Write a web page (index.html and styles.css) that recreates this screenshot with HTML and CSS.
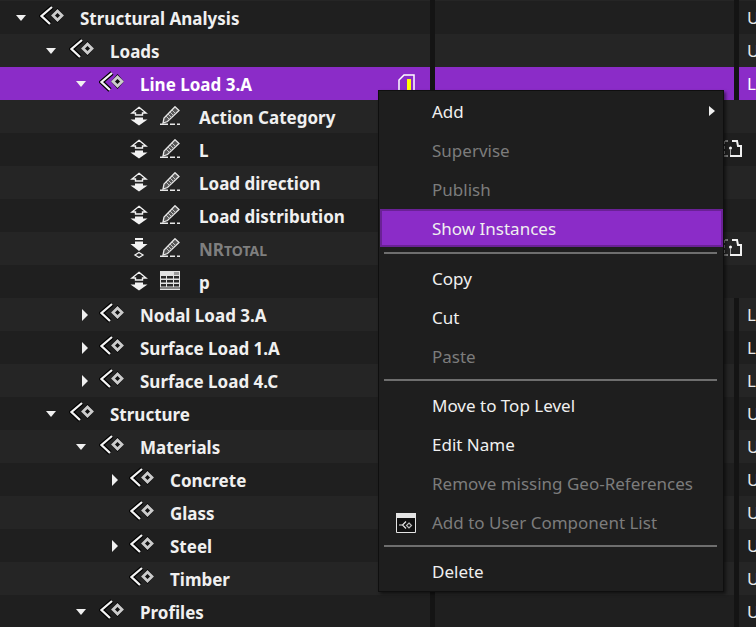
FILE: index.html
```html
<!DOCTYPE html>
<html lang="en">
<head>
    <meta charset="UTF-8">
    <meta name="viewport" content="width=device-width, initial-scale=1.0">
    <title>Component Tree</title>
    <link rel="stylesheet" href="styles.css">
</head>
<body>

<svg class="defs" width="0" height="0" aria-hidden="true">
    <symbol id="comp" viewBox="0 0 25 21">
        <path d="M13 2 2.500 11 11 19" fill="none" stroke="#000" stroke-width="4.500"/>
        <path d="M18.500 3 25 10.500 18.500 18 12 10.500Z" fill="#000"/>
        <path d="M13 2 2.500 11 11 19" fill="none" stroke="#f4f4f4" stroke-width="2.300"/>
        <path d="M18.500 6 23 10.500 18.500 15 14 10.500Z" fill="#111" stroke="#cccccc" stroke-width="2.800"/>
    </symbol>
    <symbol id="updown" viewBox="0 0 18 19">
        <path d="M9 .8 16 6.500H12.500V8.500H5.500V6.500H2Z" fill="none" stroke="#f2f2f2" stroke-width="1.400"/>
        <path d="M5 11H13V13H17.500L9 19 .5 13H5Z" fill="#f2f2f2"/>
    </symbol>
    <symbol id="downset" viewBox="0 0 18 20">
        <path d="M5 0H13V2H5ZM5 3.500H13V6H17.500L9 13 .5 6H5Z" fill="#f2f2f2"/>
        <path d="M9 14.500 13 17 9 19.500 5 17Z" fill="none" stroke="#f2f2f2" stroke-width="1.300"/>
    </symbol>
    <symbol id="pencil" viewBox="0 0 20 19">
        <path d="M15 .7 19 4.500 7.500 15.500 3 17 4 12Z" fill="#555" stroke="#e8e8e8" stroke-width="1.300"/>
        <path d="M6 10 9.500 13.500M8 8 11.500 11.500M10 6 13.500 9.500M12 4 15.500 7.500" stroke="#c4c4c4" stroke-width="1"/>
        <path d="M0 18.200H8M10 18.200H15M17 18.200H20" stroke="#e8e8e8" stroke-width="1.500"/>
    </symbol>
    <symbol id="table" viewBox="0 0 20 19">
        <path d="M0 0H20V19H0Z" fill="#e2e2e2"/>
        <path d="M14 1H19V4H14Z" fill="#9a9a9a"/>
        <path d="M1 5H6V7.500H1ZM7 5H13V7.500H7ZM14 5H19V7.500H14ZM1 9H6V11.500H1ZM7 9H13V11.500H7ZM14 9H19V11.500H14ZM1 13H6V15.500H1ZM7 13H13V15.500H7ZM14 13H19V15.500H14ZM0 16.500H20V17.500H0Z" fill="#2a2a2a"/>
    </symbol>
    <symbol id="link" viewBox="0 0 19 17">
        <path d="M9 1H14L15 6H18V16H7" fill="none" stroke="#f2f2f2" stroke-width="2"/>
        <path d="M1 1V4M1 6V9M1 11V14M1 16H5M2 1H5" stroke="#ddd" stroke-width="1" fill="none"/>
        <circle cx="7.500" cy="8" r="1.500" fill="#f2f2f2"/>
        <path d="M7.500 9V15" stroke="#aaa" stroke-width="1"/>
    </symbol>
</svg>

<div class="tree">
    <div class="row stub"><div class="name"></div><div class="sep"></div><div class="mid"></div><div class="sep"></div></div>

    <div class="row">
        <div class="name lvl-0"><span class="tri down"></span><svg class="ic-comp"><use href="#comp"/></svg><span class="label">Structural Analysis</span></div>
        <div class="sep"></div><div class="mid"></div><div class="sep"></div><div class="last">U</div>
    </div>
    <div class="row">
        <div class="name lvl-1"><span class="tri down"></span><svg class="ic-comp"><use href="#comp"/></svg><span class="label">Loads</span></div>
        <div class="sep"></div><div class="mid"></div><div class="sep"></div><div class="last">U</div>
    </div>
    <div class="row selected">
        <div class="name lvl-2"><span class="tri down"></span><svg class="ic-comp"><use href="#comp"/></svg><span class="label">Line Load 3.A</span>
            <svg class="ic-note" viewBox="0 0 17 20"><path d="M6 1H16V19H1V6Z" fill="none" stroke="#fff" stroke-width="1.500"/><path d="M9 5H13V17H9Z" fill="#ffff00"/></svg>
        </div>
        <div class="sep"></div><div class="mid"></div><div class="sep"></div><div class="last">L</div>
    </div>

    <div class="row param">
        <svg class="ic-arrow"><use href="#updown"/></svg><svg class="ic-kind"><use href="#pencil"/></svg><span class="label">Action Category</span>
    </div>
    <div class="row param">
        <svg class="ic-arrow"><use href="#updown"/></svg><svg class="ic-kind"><use href="#pencil"/></svg><span class="label">L</span>
        <svg class="ic-link"><use href="#link"/></svg>
    </div>
    <div class="row param">
        <svg class="ic-arrow"><use href="#updown"/></svg><svg class="ic-kind"><use href="#pencil"/></svg><span class="label">Load direction</span>
    </div>
    <div class="row param">
        <svg class="ic-arrow"><use href="#updown"/></svg><svg class="ic-kind"><use href="#pencil"/></svg><span class="label">Load distribution</span>
    </div>
    <div class="row param">
        <svg class="ic-arrow"><use href="#downset"/></svg><svg class="ic-kind"><use href="#pencil"/></svg><span class="label muted">NR<span class="caps">TOTAL</span></span>
        <svg class="ic-link"><use href="#link"/></svg>
    </div>
    <div class="row param">
        <svg class="ic-arrow"><use href="#updown"/></svg><svg class="ic-kind"><use href="#table"/></svg><span class="label">p</span>
    </div>

    <div class="row">
        <div class="name lvl-2"><span class="tri right"></span><svg class="ic-comp"><use href="#comp"/></svg><span class="label">Nodal Load 3.A</span></div>
        <div class="sep"></div><div class="mid"></div><div class="sep"></div><div class="last">L</div>
    </div>
    <div class="row">
        <div class="name lvl-2"><span class="tri right"></span><svg class="ic-comp"><use href="#comp"/></svg><span class="label">Surface Load 1.A</span></div>
        <div class="sep"></div><div class="mid"></div><div class="sep"></div><div class="last">L</div>
    </div>
    <div class="row">
        <div class="name lvl-2"><span class="tri right"></span><svg class="ic-comp"><use href="#comp"/></svg><span class="label">Surface Load 4.C</span></div>
        <div class="sep"></div><div class="mid"></div><div class="sep"></div><div class="last">L</div>
    </div>
    <div class="row">
        <div class="name lvl-1"><span class="tri down"></span><svg class="ic-comp"><use href="#comp"/></svg><span class="label">Structure</span></div>
        <div class="sep"></div><div class="mid"></div><div class="sep"></div><div class="last">U</div>
    </div>
    <div class="row">
        <div class="name lvl-2"><span class="tri down"></span><svg class="ic-comp"><use href="#comp"/></svg><span class="label">Materials</span></div>
        <div class="sep"></div><div class="mid"></div><div class="sep"></div><div class="last">U</div>
    </div>
    <div class="row">
        <div class="name lvl-3"><span class="tri right"></span><svg class="ic-comp"><use href="#comp"/></svg><span class="label">Concrete</span></div>
        <div class="sep"></div><div class="mid"></div><div class="sep"></div><div class="last">U</div>
    </div>
    <div class="row">
        <div class="name lvl-3"><span class="tri"></span><svg class="ic-comp"><use href="#comp"/></svg><span class="label">Glass</span></div>
        <div class="sep"></div><div class="mid"></div><div class="sep"></div><div class="last">U</div>
    </div>
    <div class="row">
        <div class="name lvl-3"><span class="tri right"></span><svg class="ic-comp"><use href="#comp"/></svg><span class="label">Steel</span></div>
        <div class="sep"></div><div class="mid"></div><div class="sep"></div><div class="last">U</div>
    </div>
    <div class="row">
        <div class="name lvl-3"><span class="tri"></span><svg class="ic-comp"><use href="#comp"/></svg><span class="label">Timber</span></div>
        <div class="sep"></div><div class="mid"></div><div class="sep"></div><div class="last">U</div>
    </div>
    <div class="row">
        <div class="name lvl-2"><span class="tri down"></span><svg class="ic-comp"><use href="#comp"/></svg><span class="label">Profiles</span></div>
        <div class="sep"></div><div class="mid"></div><div class="sep"></div><div class="last">U</div>
    </div>
</div>

<div class="menu">
    <div class="item has-sub">Add</div>
    <div class="item off">Supervise</div>
    <div class="item off">Publish</div>
    <div class="item active">Show Instances</div>
    <div class="divider"></div>
    <div class="item">Copy</div>
    <div class="item">Cut</div>
    <div class="item off">Paste</div>
    <div class="divider"></div>
    <div class="item">Move to Top Level</div>
    <div class="item">Edit Name</div>
    <div class="item off">Remove missing Geo-References</div>
    <div class="item off">
        <svg class="ic-user" viewBox="0 0 20 20">
            <path d="M.5 .5H19.500V19.500H.5Z" fill="#111" stroke="#e4e4e4"/>
            <path d="M0 0H20V5H0Z" fill="#e4e4e4"/>
            <path d="M3 12H7M10 8.500 6.500 12 10 15.500" fill="none" stroke="#e4e4e4" stroke-width="1.200"/>
            <path d="M13 10 15.500 12.500 13 15 10.500 12.500Z" fill="none" stroke="#bbb" stroke-width="1.200"/>
        </svg>
        Add to User Component List
    </div>
    <div class="divider"></div>
    <div class="item">Delete</div>
</div>

</body>
</html>
```

FILE: styles.css
```css
* {
    box-sizing: border-box;
}
html, body {
    margin: 0;
    padding: 0;
    height: 100%;
}
body {
    position: relative;
    overflow: hidden;
    background-color: #1f1f1f;
    color: #f0f0f0;
    font-family: "Noto Sans", "Open Sans", Arial, sans-serif;
    font-size: 17px;
}
.defs {
    position: absolute;
}

/* tree */
.tree {
    width: 756px;
}
.row {
    display: flex;
    align-items: stretch;
    height: 33px;
    background-color: #252525;
}
.row:nth-child(even) {
    background-color: #1f1f1f;
}
.row.stub {
    height: 1px;
}
.row.selected {
    background-color: #8b2cc8;
    color: #fff;
}
.name {
    display: flex;
    align-items: center;
    position: relative;
    flex: none;
    width: 430px;
}
.lvl-0 { padding-left: 16px; }
.lvl-1 { padding-left: 46px; }
.lvl-2 { padding-left: 76px; }
.lvl-3 { padding-left: 106px; }
.sep {
    flex: none;
    width: 5px;
    background-color: #141414;
}
.mid {
    flex: none;
    width: 299px;
}
.last {
    flex: 1;
    padding-left: 8px;
    line-height: 34px;
    color: #e8e8e8;
}
.selected .last {
    color: #fff;
}
.label {
    padding-top: 2px;
    font-weight: 700;
    white-space: nowrap;
}
.tri {
    flex: none;
    width: 23px;
    height: 12px;
    position: relative;
}
.tri.down::before {
    content: "";
    position: absolute;
    left: 0;
    top: 3px;
    border-left: 5.5px solid transparent;
    border-right: 5.5px solid transparent;
    border-top: 6px solid #f0f0f0;
}
.tri.right::before {
    content: "";
    position: absolute;
    left: 6px;
    top: 0;
    border-top: 6px solid transparent;
    border-bottom: 6px solid transparent;
    border-left: 6px solid #f0f0f0;
}
.ic-comp {
    flex: none;
    width: 25px;
    height: 21px;
    margin: -4px 16px 0 0;
}
.ic-note {
    position: absolute;
    left: 398px;
    top: 7px;
    width: 17px;
    height: 20px;
}

/* parameter rows have no column separators */
.row.param {
    align-items: center;
    padding-left: 130px;
    position: relative;
}
.ic-arrow {
    flex: none;
    width: 18px;
    height: 20px;
    margin: -2px 12px 0 0;
}
.ic-kind {
    flex: none;
    width: 20px;
    height: 19px;
    margin: -2px 19px 0 0;
}
.label.muted {
    color: #7f7f7f;
}
.caps {
    font-size: 14px;
}
.ic-link {
    position: absolute;
    left: 723px;
    top: 7px;
    width: 19px;
    height: 17px;
}

/* context menu */
.menu {
    position: absolute;
    left: 378px;
    top: 90px;
    width: 346px;
    height: 502px;
    padding-top: 1px;
    background-color: #1e1e1e;
    border: 1px solid #0f0f0f;
    box-shadow: 2px 2px 3px rgba(0, 0, 0, 0.5);
}
.item {
    display: flex;
    align-items: center;
    position: relative;
    height: 39px;
    padding-left: 53px;
    color: #f0f0f0;
}
.item.off {
    color: #7c7c7c;
}
.item.active {
    height: 38px;
    margin: 0 0 5px 1px;
    padding: 1px 0 0 50px;
    background-color: #8b2cc8;
    border: 2px solid #6a2196;
}
.has-sub::after {
    content: "";
    position: absolute;
    left: 330px;
    top: 14px;
    border-top: 5px solid transparent;
    border-bottom: 5px solid transparent;
    border-left: 6px solid #f0f0f0;
}
.divider {
    height: 2px;
    margin: 3px 6px 5px 5px;
    background-color: #6e6e6e;
}
.ic-user {
    position: absolute;
    left: 17px;
    top: 10px;
    width: 20px;
    height: 20px;
}
```
